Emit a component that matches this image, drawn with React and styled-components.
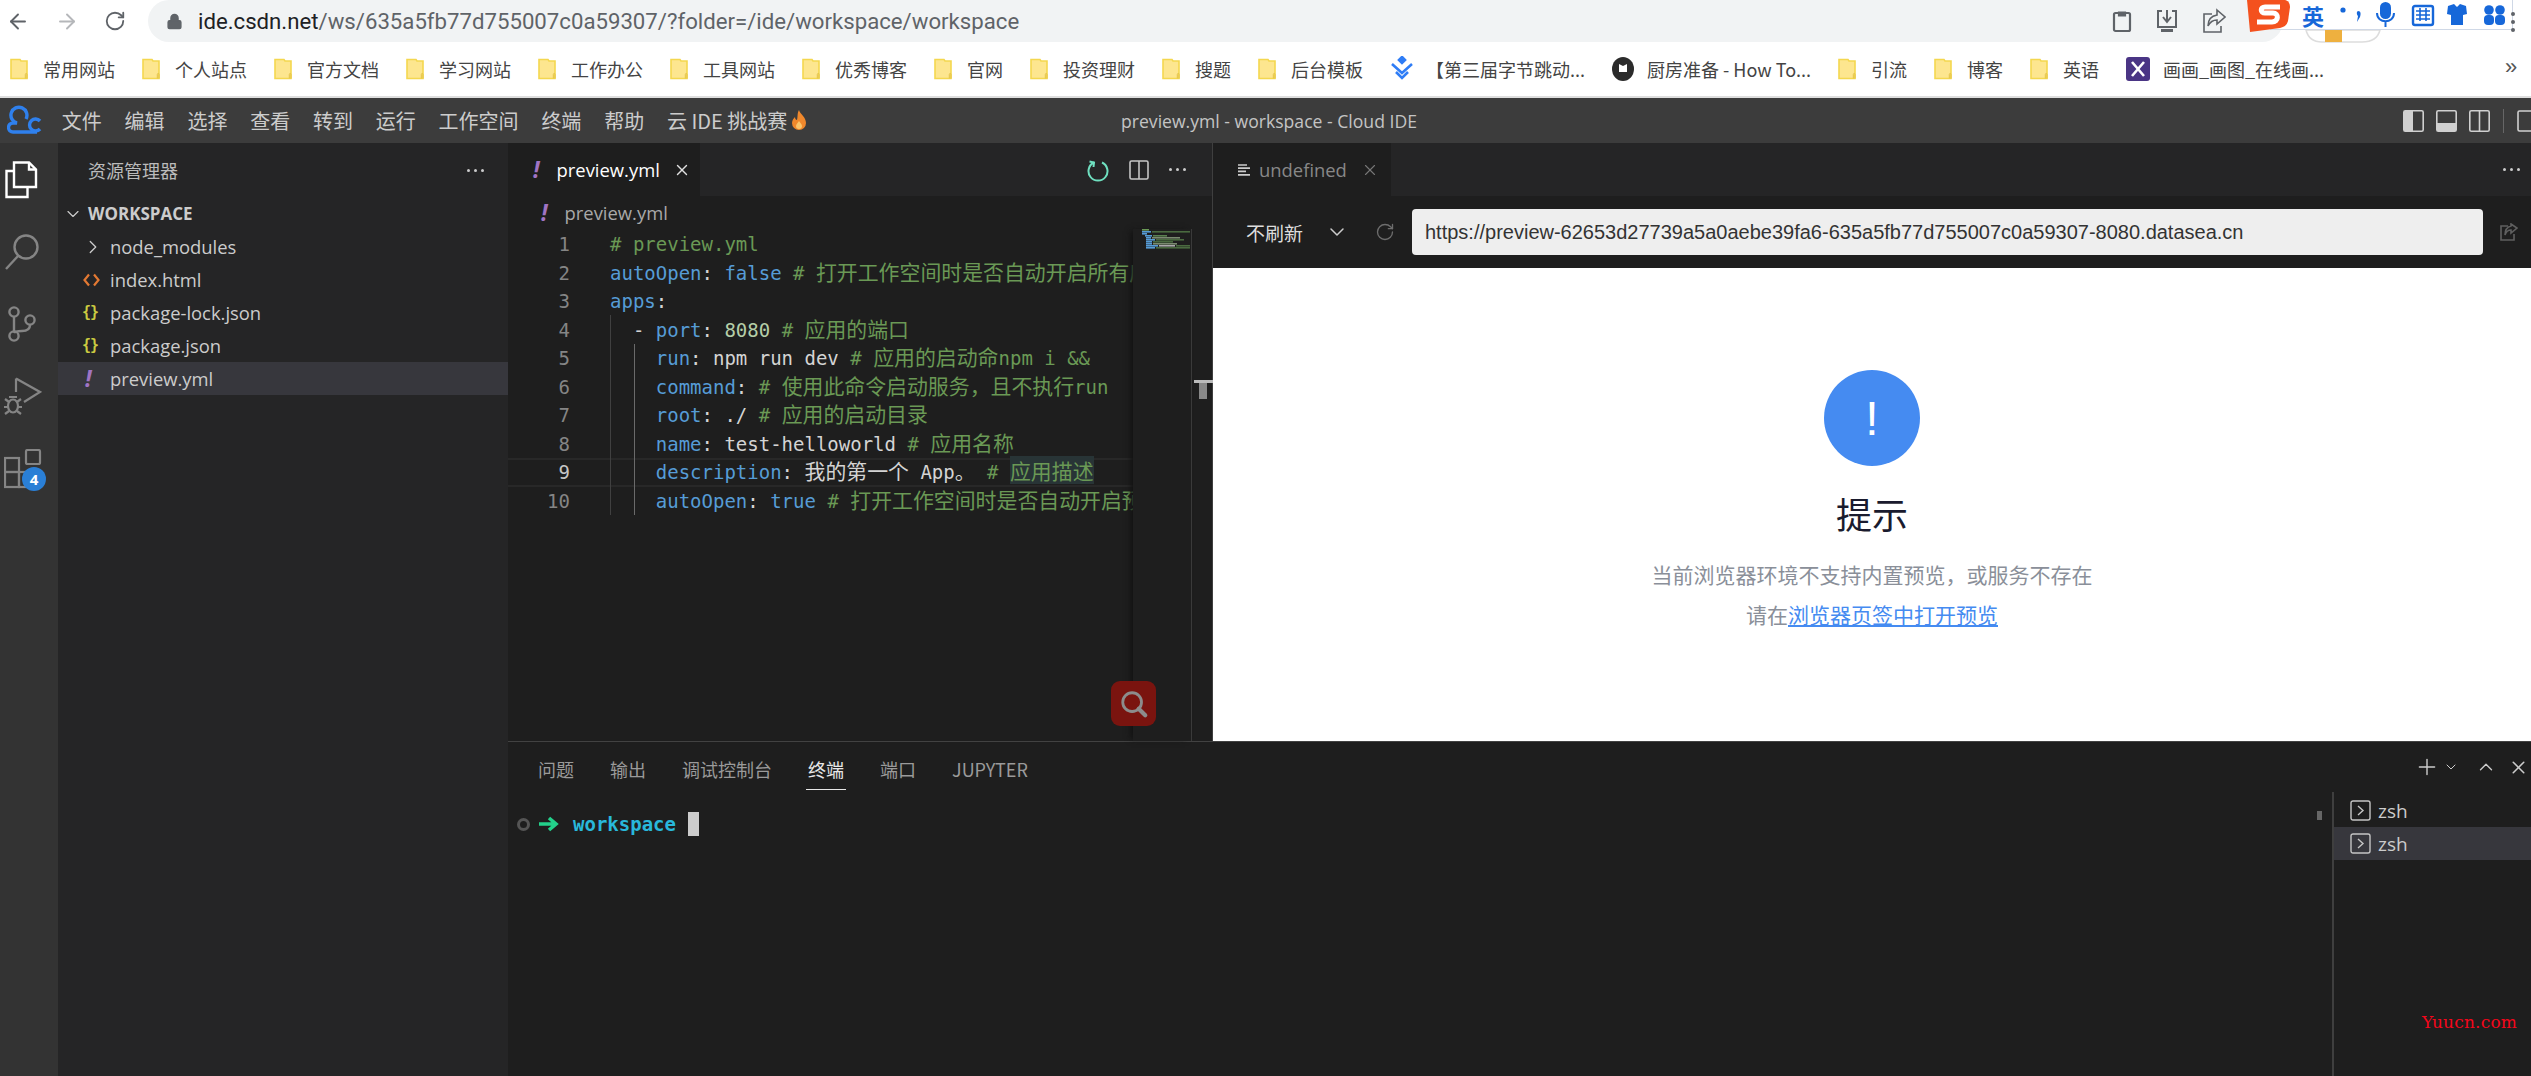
import React from "react";
import styled, { createGlobalStyle } from "styled-components";
import { ArrowLeft, ArrowRight, RotateCw, Lock, ChevronDown, ChevronRight, ChevronUp, X, Plus } from "lucide-react";

const UI = '"Open Sans","Noto Sans CJK SC",sans-serif';
const ZH = '"Noto Sans CJK SC","Open Sans",sans-serif';
const MONO = '"DejaVu Sans Mono","Noto Sans CJK SC",monospace';

const Global = createGlobalStyle`
  html, body { margin: 0; padding: 0; background: #fff; overflow: hidden; }
  * { box-sizing: border-box; }
`;

const Page = styled.div`
  position: relative; width: 2531px; height: 1076px; display: flex; flex-direction: column; overflow: hidden;
  font-family: ${UI};
`;

/* browser chrome */
const BrowserBar = styled.div`
  height: 42px; flex: none; display: flex; align-items: center; background: #fff; padding-left: 6px;
`;
const NavBtn = styled.div`
  width: 24px; height: 24px; margin-right: ${p => p.$mr || 24}px; color: ${p => p.$dim ? "#b5b7ba" : "#5f6368"};
  display: flex; align-items: center; justify-content: center;
`;
const Omnibox = styled.div`
  width: 2135px; height: 42px; margin-left: -3px; background: #f1f3f4; display: flex; align-items: center;
  padding-left: 18px; border-radius: 21px;
`;
const UrlText = styled.div`
  margin-left: 15px; font: 400 22.2px "Roboto", sans-serif; color: #5f6368; white-space: nowrap;
  b { color: #202124; font-weight: 400; }
`;
const OmniActions = styled.div`
  margin-left: auto; display: flex; gap: 23px; margin-right: 57px; align-items: center; color: #5f6368;
`;
const Bookmarks = styled.div`
  height: 54px; flex: none; display: flex; align-items: center; gap: 27px; padding-left: 10px; background: #fff; position: relative;
`;
const Bookmark = styled.div`
  display: flex; align-items: center; gap: ${p => p.$gap ?? 15}px; font: 400 18px ${ZH}; color: #444; white-space: nowrap;
`;
const More = styled.div`
  position: absolute; left: 2505px; top: 12px; font: 400 22px "Liberation Sans", sans-serif; color: #555;
`;
const Rule = styled.div`height: 2px; flex: none; background: #dedede;`;

/* IME overlay */
const Ime = styled.div`
  position: absolute; left: 2270px; top: 0; width: 243px; height: 30px; background: #fff; border: 1px solid #cfd8e6; border-top: 0;
  display: flex; align-items: center; padding-left: 31px; color: #1667d9;
`;
const ImeLetter = styled.span`font: 700 22px ${ZH}; color: #1667d9; margin-right: 15px;`;
const ImeLogo = styled.svg`position: absolute; left: 2243px; top: -1px;`;
const Peek = styled.svg`position: absolute; left: 2300px; top: 29px;`;
const MenuDots = styled.svg`position: absolute; left: 2510px; top: 11px;`;

/* IDE title */
const TitleBar = styled.div`
  height: 45px; flex: none; background: #3c3c3c; display: grid; grid-template-columns: 1fr auto 1fr; align-items: center; padding-left: 7px; color: #ccc;
`;
const TitleLeft = styled.div`display: flex; align-items: center; gap: 22.8px;`;
const Menu = styled.span`font: 400 20px ${ZH}; color: #cccccc; white-space: nowrap;`;
const Fire = styled.svg`margin-left: -19px;`;
const TitleText = styled.div`font: 400 17.6px ${UI}; color: #c4c4c4; white-space: nowrap;`;
const TitleRight = styled.div`display: flex; justify-content: flex-end; align-items: center; gap: 12px; overflow: hidden;`;
const VBar = styled.div`width: 1px; height: 24px; background: #666; margin: 0 1px;`;

/* workbench */
const Workbench = styled.div`flex: 1; min-height: 0; display: flex;`;
const ActivityBar = styled.div`
  width: 58px; flex: none; background: #333; display: flex; flex-direction: column; align-items: flex-start; gap: 36px; padding: 18px 0 0 4px; color: #858585;
`;
const ActIcon = styled.div`position: relative; width: 38px; height: 36px; color: ${p => p.$on ? "#fff" : "#858585"};`;
const Badge = styled.div`
  position: absolute; left: 18px; top: 18px; width: 24px; height: 24px; border-radius: 50%; background: #2a7fd6; color: #fff;
  font: 700 15px ${UI}; display: flex; align-items: center; justify-content: center;
`;
const SideBar = styled.div`width: 450px; flex: none; background: #252526; display: flex; flex-direction: column;`;
const SideHead = styled.div`
  height: 54px; flex: none; display: flex; align-items: center; justify-content: space-between; padding: 0 24px 0 30px;
  font: 400 18px ${ZH}; color: #bbb;
`;
const Dots = styled.div`
  display: flex; gap: 4px; margin-right: ${p => p.$mr || 0}px;
  i { width: 3px; height: 3px; border-radius: 50%; background: #ccc; display: block; }
`;
const TreeRow = styled.div`
  height: 33px; display: flex; align-items: center; color: #ccc; background: ${p => p.$on ? "#37373d" : "transparent"};
  font: ${p => p.$root ? 700 : 400} ${p => p.$root ? "17px" : "18.4px"} ${UI}; white-space: nowrap;
`;
const TreeIcon = styled.span`
  width: ${p => p.$w || 52}px; flex: none; display: flex; align-items: center; padding-left: ${p => p.$pl || 0}px;
  color: ${p => p.$c || "#ccc"};
`;
const Braces = styled.span`font: 700 15px/1 ${MONO}; color: #cbcb41; letter-spacing: -1px;`;
const Bang = styled.span`font: italic 700 ${p => p.$s || 23}px ${UI}; color: #a074c4; line-height: 1;`;

const Main = styled.div`flex: 1; min-width: 0; display: flex; flex-direction: column;`;
const TopSplit = styled.div`height: 598px; flex: none; display: flex;`;
const Editor = styled.div`width: 704px; flex: none; background: #1e1e1e; display: flex; flex-direction: column; position: relative;`;
const TabBar = styled.div`height: 53px; flex: none; background: #252526; display: flex; align-items: stretch;`;
const Tab = styled.div`
  width: ${p => p.$w}px; flex: none; background: #1e1e1e; display: flex; align-items: center; padding-left: ${p => p.$pl}px;
  font: 400 18.4px ${UI}; color: ${p => p.$on ? "#fff" : "#888"}; white-space: nowrap;
`;
const TabActions = styled.div`margin-left: auto; display: flex; align-items: center; gap: ${p => p.$gap || 15}px; padding-right: ${p => p.$pr || 21}px;`;
const Crumb = styled.div`
  height: 33px; flex: none; display: flex; align-items: center; gap: 17px; padding-left: 33px; font: 400 18.4px ${UI}; color: #a9a9a9;
`;
const CodeWrap = styled.div`flex: 1; min-height: 0; display: flex;`;
const Code = styled.div`position: relative; width: 625px; flex: none; overflow: hidden; padding-top: 1px;`;
const Row = styled.div`
  display: flex; height: 28.5px; align-items: baseline; white-space: pre; font: 400 19px/28.5px ${MONO};
  ${p => p.$cur && "box-shadow: inset 0 2px 0 #282828, inset 0 -2px 0 #282828;"}
`;
const Num = styled.span`width: 62px; flex: none; margin-right: 40px; text-align: right; color: ${p => p.$on ? "#c6c6c6" : "#858585"};`;
const K = styled.span`color: #569cd6;`;
const V = styled.span`color: #d4d4d4;`;
const N = styled.span`color: #b5cea8;`;
const C = styled.span`color: #6a9955;`;
const Zh = styled.span`
  font: 400 20.9px/21px ${ZH}; color: ${p => p.$c || "#6a9955"};
  ${p => p.$hl && "background: #283436; box-shadow: 0 3px 0 #283436, 0 -4px 0 #283436;"}
`;
const Guide = styled.div`position: absolute; left: ${p => p.$x}px; top: ${p => p.$t}px; height: ${p => p.$h}px; width: 1px; background: ${p => p.$c};`;
const Mini = styled.div`
  width: 58px; flex: none; background: #1e1e1e; box-shadow: -4px 0 6px -2px #111; position: relative; z-index: 1; padding: 0 0 0 9px;
`;
const OverviewRuler = styled.div`flex: 1; border-left: 1px solid #3b3b3b; position: relative;`;
const RulerMark = styled.div`
  position: absolute; left: 2px; top: 151px; width: 19px; height: 3px; background: #bbb;
  &::after { content: ""; position: absolute; left: 5px; top: 3px; width: 8px; height: 16px; background: #888; }
`;
const FindBtn = styled.div`
  position: absolute; left: 603px; top: 538px; width: 45px; height: 45px; border-radius: 9px; background: #7a140f;
  display: flex; align-items: center; justify-content: center; z-index: 2;
`;

const Preview = styled.div`flex: 1; min-width: 0; border-left: 1px solid #3f3f3f; display: flex; flex-direction: column; background: #fff;`;
const PvToolbar = styled.div`
  height: 72px; flex: none; background: #1e1e1e; display: flex; align-items: center; padding-left: 33px; color: #ccc;
`;
const Sel = styled.span`font: 400 19px ${ZH}; color: #ddd; width: 59px; white-space: nowrap;`;
const AddrInput = styled.div`
  width: 1071px; height: 46px; margin-left: 17px; background: #eee; border-radius: 4px; padding-left: 13px; display: flex; align-items: center;
  font: 400 20px "Liberation Sans", sans-serif; color: #333; white-space: nowrap; flex: none;
`;
const PvBody = styled.div`flex: 1; background: #fff; display: flex; flex-direction: column; align-items: center; padding-top: 102px;`;
const Circle = styled.div`
  width: 96px; height: 96px; border-radius: 50%; background: #458bf1; color: #fff; display: flex; align-items: center; justify-content: center;
  font: 300 48px "Liberation Sans", sans-serif;
`;
const Heading = styled.div`margin-top: 20px; font: 400 36px/54px ${ZH}; color: #1a1b2e;`;
const Para = styled.div`margin-top: 14px; font: 400 21px/40px ${ZH}; color: #8a8f99; text-align: center; a { color: #458bf1; text-decoration: underline; }`;

/* bottom panel */
const Panel = styled.div`flex: 1; min-height: 0; border-top: 1px solid #424242; background: #1e1e1e; display: flex; flex-direction: column; position: relative;`;
const PanelHead = styled.div`height: 50px; flex: none; display: flex; align-items: stretch; padding-left: 30px; gap: 36px;`;
const PanelTab = styled.div`
  font: 400 18px ${ZH}; color: ${p => p.$on ? "#e7e7e7" : "#9a9a9a"}; display: flex; align-items: center; padding: 4px 0 0;
  position: relative; white-space: nowrap;
  ${p => p.$on && `&::after { content: ""; position: absolute; left: -2px; right: -2px; bottom: 2px; height: 1.5px; background: #e7e7e7; }`}
`;
const PanelActions = styled.div`margin-left: auto; display: flex; align-items: center; color: #ccc; padding: 0 2px 0 0;`;
const PanelAct = styled.div`display: flex; margin-right: ${p => p.$mr || 0}px;`;
const PanelBody = styled.div`flex: 1; min-height: 0; display: flex;`;
const Term = styled.div`flex: 1; position: relative; display: flex; align-items: flex-start; padding: 20px 0 0 9px;`;
const Prompt = styled.div`display: flex; align-items: center; font: 700 19px ${MONO}; color: #29b8db; height: 24px; white-space: pre;`;
const Ring = styled.span`width: 13px; height: 13px; border: 3px solid #555; border-radius: 50%; margin-right: 9px;`;
const Cursor = styled.span`width: 11px; height: 24px; background: #ccc; margin-left: 12px;`;
const TermBar = styled.div`position: absolute; right: 10px; top: 19px; width: 5px; height: 9px; background: #666;`;
const TermList = styled.div`width: 199px; flex: none; border-left: 2px solid #3f3f3f; display: flex; flex-direction: column; padding-top: 2px;`;
const TermItem = styled.div`
  height: 33px; display: flex; align-items: center; gap: 7px; padding-left: 16px; background: ${p => p.$on ? "#37373d" : "none"};
  font: 400 19px ${UI}; color: #ccc;
`;
const Watermark = styled.div`
  position: absolute; left: 2422px; top: 1011px; font: 400 17px/22px "DejaVu Serif", serif; color: #f5061b; white-space: nowrap; letter-spacing: 0.2px;
`;
const BlueMark = styled.svg`margin-right: -1px;`;

const Folder = () => (
  <svg width="18" height="22" viewBox="0 0 18 22">
    <path d="M1 1.5h9l1 1.5h6v17.5H1z" fill="#fde68f" stroke="#f4d74f" strokeWidth="1.6" />
    <path d="M15.3 20.5v-4c0-1.4 1.7-1.4 1.7 0v4" fill="none" stroke="#e3c245" strokeWidth="1" />
  </svg>
);

const Book = ({ children }) => <Bookmark><Folder />{children}</Bookmark>;

const DotsRow = ({ mr }) => <Dots $mr={mr}><i /><i /><i /></Dots>;

const Line = ({ n, cur, children }) => (
  <Row $cur={cur}><Num $on={cur}>{n}</Num>{children}</Row>
);

const Layout = ({ kind }) => (
  <svg width="21" height="22" viewBox="0 0 21 22" fill="none">
    <rect x="0.8" y="0.8" width="19.4" height="20.4" rx="1.5" stroke="#d0d0d0" strokeWidth="1.6" />
    {kind === "left" && <rect x="1" y="1" width="9" height="20" fill="#d0d0d0" />}
    {kind === "bottom" && <rect x="1" y="13" width="19" height="8" fill="#d0d0d0" />}
    {kind === "right" && <path d="M10.5 1v20" stroke="#d0d0d0" strokeWidth="1.6" />}
  </svg>
);

const TermGlyph = () => (
  <svg width="21" height="21" viewBox="0 0 21 21" fill="none" stroke="#c5c5c5" strokeWidth="1.4">
    <rect x="1" y="1" width="19" height="19" rx="2" />
    <path d="M8 6l5 4.5L8 15" />
  </svg>
);

export default function App() {
  return (
    <Page>
      <Global />
      <BrowserBar>
        <NavBtn $mr={25}><ArrowLeft size={25} strokeWidth={1.9} /></NavBtn>
        <NavBtn $dim $mr={24}><ArrowRight size={25} strokeWidth={1.9} /></NavBtn>
        <NavBtn $mr={24}><RotateCw size={22} strokeWidth={2} /></NavBtn>
        <Omnibox>
          <Lock size={17} fill="#5f6368" color="#5f6368" />
          <UrlText><b>ide.csdn.net</b>/ws/635a5fb77d755007c0a59307/?folder=/ide/workspace/workspace</UrlText>
          <OmniActions>
            <svg width="20" height="24" viewBox="0 0 20 24" fill="none" stroke="#5f6368" strokeWidth="2.2"><rect x="2" y="4" width="16" height="18" rx="1.5" /><path d="M7 3.5h6v3H7z" fill="#5f6368" /></svg>
            <svg width="24" height="26" viewBox="0 0 24 26" fill="none" stroke="#5f6368" strokeWidth="2"><path d="M7 3H3v16h18V3h-4" /><path d="M12 2v11M8 9l4 5 4-5" /><path d="M6 22.5h12" strokeWidth="3" /></svg>
            <svg width="24" height="26" viewBox="0 0 24 26" fill="none" stroke="#5f6368" strokeWidth="1.6"><path d="M10 6H2v18h17v-6" /><path d="M15 2l8 7-8 7v-4c-4 0-7 2-9 6 0-6 3-10 9-11z" /></svg>
          </OmniActions>
        </Omnibox>
      </BrowserBar>
      <Bookmarks>
        <Book>常用网站</Book><Book>个人站点</Book><Book>官方文档</Book><Book>学习网站</Book><Book>工作办公</Book><Book>工具网站</Book><Book>优秀博客</Book><Book>官网</Book><Book>投资理财</Book><Book>搜题</Book><Book>后台模板</Book>
        <Bookmark $gap={13}>
          <BlueMark width="24" height="26" viewBox="0 0 24 26" fill="none" stroke="#2f7df6" strokeWidth="2.6"><path d="M12 1l3 3-3 3-3-3z" fill="#2f7df6" /><path d="M2 8l10 9 10-9" /><path d="M6 16l6 6 6-6" /></BlueMark>
          【第三届字节跳动...
        </Bookmark>
        <Bookmark $gap={13}>
          <svg width="22" height="24" viewBox="0 0 22 24"><ellipse cx="11" cy="12" rx="11" ry="12" fill="#2b2b2b" /><path d="M7 7l4 2 4-2v8H7z" fill="#fff" /></svg>
          厨房准备 - How To...
        </Bookmark>
        <Book>引流</Book><Book>博客</Book><Book>英语</Book>
        <Bookmark $gap={13}>
          <svg width="24" height="24" viewBox="0 0 24 24"><rect width="24" height="24" rx="3" fill="#4a3585" /><path d="M6 5l12 14M18 5L6 19" stroke="#fff" strokeWidth="2.6" /></svg>
          画画_画图_在线画...
        </Bookmark>
        <More>»</More>
      </Bookmarks>
      <Rule />
      <TitleBar>
        <TitleLeft>
          <svg width="36" height="32" viewBox="0 0 36 32" fill="none" stroke="#2f80ed" strokeWidth="3.4" style={{ marginRight: -4 }}>
            <path d="M19 14a8 8 0 1 0-9 4H6a4.5 4.5 0 0 0 0 9h24" />
            <path d="M33 16a6 6 0 1 0 0 8" />
          </svg>
          <Menu>文件</Menu><Menu>编辑</Menu><Menu>选择</Menu><Menu>查看</Menu><Menu>转到</Menu><Menu>运行</Menu><Menu>工作空间</Menu><Menu>终端</Menu><Menu>帮助</Menu><Menu>云 IDE 挑战赛</Menu>
          <Fire width="16" height="21" viewBox="0 0 16 21"><path d="M8 0c1 4 7 7 7 13a7 7 0 0 1-14 0c0-3 2-5 3-6 0 2 1 3 2 3 1-3 0-7 2-10z" fill="#f0882c" /><path d="M8 11c1 2 3 3 3 5a3 3 0 0 1-6 0c0-2 2-3 3-5z" fill="#fbc56a" /></Fire>
        </TitleLeft>
        <TitleText>preview.yml - workspace - Cloud IDE</TitleText>
        <TitleRight>
          <Layout kind="left" /><Layout kind="bottom" /><Layout kind="right" /><VBar />
          <svg width="14" height="22" viewBox="0 0 14 22" fill="none" stroke="#d0d0d0" strokeWidth="1.6"><rect x="1" y="1" width="20" height="20" rx="1.5" /></svg>
        </TitleRight>
      </TitleBar>
      <Workbench>
        <ActivityBar>
          <ActIcon $on>
            <svg width="36" height="38" viewBox="0 0 36 38" fill="none" stroke="currentColor" strokeWidth="2.4"><path d="M11 10H2.5v26h21v-9" /><path d="M10 1.5h15l7 7V26H10z" /><path d="M25 1.5v7h7" /></svg>
          </ActIcon>
          <ActIcon>
            <svg width="36" height="38" viewBox="0 0 36 38" fill="none" stroke="currentColor" strokeWidth="2.4"><circle cx="22" cy="14" r="11.5" /><path d="M14 23L2 36" /></svg>
          </ActIcon>
          <ActIcon>
            <svg width="36" height="38" viewBox="0 0 36 38" fill="none" stroke="currentColor" strokeWidth="2.4"><circle cx="10" cy="7" r="4.6" /><circle cx="10" cy="31" r="4.6" /><circle cx="26" cy="15" r="4.6" /><path d="M10 12v14M26 20c0 5-4 6-8 6s-7 0-8 2" /></svg>
          </ActIcon>
          <ActIcon>
            <svg width="38" height="38" viewBox="0 0 38 38" fill="none" stroke="currentColor" strokeWidth="2.2"><path d="M12 1.5L36 15 20 25M12 1.5V15" /><ellipse cx="9" cy="29" rx="5" ry="6.5" /><path d="M1 22l4 3M17 22l-4 3M0 30h4M14 30h4M1 37l4-3M17 37l-4-3M5 20h8" /></svg>
          </ActIcon>
          <ActIcon>
            <svg width="38" height="40" viewBox="0 0 38 40" fill="none" stroke="currentColor" strokeWidth="2.2"><rect x="1" y="9" width="14" height="14" /><rect x="1" y="23" width="14" height="15" /><rect x="15" y="23" width="14" height="15" /><rect x="22" y="1" width="14" height="14" rx="1.5" /></svg>
            <Badge>4</Badge>
          </ActIcon>
        </ActivityBar>
        <SideBar>
          <SideHead>资源管理器<DotsRow /></SideHead>
          <TreeRow $root><TreeIcon $w={30} $pl={5}><ChevronDown size={20} strokeWidth={1.4} /></TreeIcon>WORKSPACE</TreeRow>
          <TreeRow><TreeIcon $pl={24}><ChevronRight size={22} strokeWidth={1.4} /></TreeIcon>node_modules</TreeRow>
          <TreeRow><TreeIcon $pl={25}><svg width="17" height="14" viewBox="0 0 17 14" fill="none" stroke="#e37933" strokeWidth="2.2"><path d="M6 1.5L1.5 7 6 12.5M11 1.5L15.5 7 11 12.5" /></svg></TreeIcon>index.html</TreeRow>
          <TreeRow><TreeIcon $pl={24}><Braces>{"{}"}</Braces></TreeIcon>package-lock.json</TreeRow>
          <TreeRow><TreeIcon $pl={24}><Braces>{"{}"}</Braces></TreeIcon>package.json</TreeRow>
          <TreeRow $on><TreeIcon $pl={27}><Bang>!</Bang></TreeIcon>preview.yml</TreeRow>
        </SideBar>
        <Main>
          <TopSplit>
            <Editor>
              <TabBar>
                <Tab $on $w={192} $pl={25}>
                  <Bang>!</Bang><span style={{ marginLeft: 17 }}>preview.yml</span>
                  <X size={18} strokeWidth={1.8} color="#e0e0e0" style={{ marginLeft: 13 }} />
                </Tab>
                <TabActions $gap={20} $pr={26}>
                  <svg width="22" height="24" viewBox="0 0 22 24" fill="none" stroke="#6fe0c0" strokeWidth="2"><path d="M7 4.5a9.5 9.5 0 1 0 8 0" /><path d="M2.5 3.5L7 4.5 6.5 9" /></svg>
                  <svg width="20" height="20" viewBox="0 0 20 20" fill="none" stroke="#c5c5c5" strokeWidth="1.6"><rect x="1" y="1" width="18" height="18" rx="1.5" /><path d="M10 1v18" /></svg>
                  <DotsRow />
                </TabActions>
              </TabBar>
              <Crumb><Bang>!</Bang>preview.yml</Crumb>
              <CodeWrap>
                <Code>
                  <Guide $x={102} $t={86} $h={200} $c="#404040" />
                  <Guide $x={126} $t={115} $h={171} $c="#6a6a6a" />
                  <Line n={1}><C># preview.yml</C></Line>
                  <Line n={2}><K>autoOpen</K><V>: </V><K>false</K><C> # </C><Zh>打开工作空间时是否自动开启所有应用</Zh></Line>
                  <Line n={3}><K>apps</K><V>:</V></Line>
                  <Line n={4}><V>  - </V><K>port</K><V>: </V><N>8080</N><C> # </C><Zh>应用的端口</Zh></Line>
                  <Line n={5}><V>    </V><K>run</K><V>: npm run dev</V><C> # </C><Zh>应用的启动命</Zh><C>npm i &&</C></Line>
                  <Line n={6}><V>    </V><K>command</K><V>:</V><C> # </C><Zh>使用此命令启动服务，且不执行</Zh><C>run</C></Line>
                  <Line n={7}><V>    </V><K>root</K><V>: ./</V><C> # </C><Zh>应用的启动目录</Zh></Line>
                  <Line n={8}><V>    </V><K>name</K><V>: test-helloworld</V><C> # </C><Zh>应用名称</Zh></Line>
                  <Line n={9} cur><V>    </V><K>description</K><V>: </V><Zh $c="#d4d4d4">我的第一个</Zh><V> App</V><Zh $c="#d4d4d4">。</Zh><C> # </C><Zh $hl>应用描述</Zh></Line>
                  <Line n={10}><V>    </V><K>autoOpen</K><V>: </V><K>true</K><C> # </C><Zh>打开工作空间时是否自动开启预览</Zh></Line>
                </Code>
                <Mini>
                  <svg width="49" height="20" viewBox="0 0 49 20">
                    <rect x="0" y="0" width="7" height="1.6" fill="#6a9955" />
                    <rect x="0" y="2" width="9" height="1.6" fill="#569cd6" /><rect x="10" y="2" width="38" height="1.6" fill="#4a6a40" />
                    <rect x="0" y="4" width="5" height="1.6" fill="#569cd6" />
                    <rect x="3" y="6" width="7" height="1.6" fill="#569cd6" /><rect x="11" y="6" width="14" height="1.6" fill="#5a8050" />
                    <rect x="4" y="8" width="5" height="1.6" fill="#569cd6" /><rect x="10" y="8" width="28" height="1.6" fill="#7a8a70" />
                    <rect x="4" y="10" width="9" height="1.6" fill="#569cd6" /><rect x="14" y="10" width="28" height="1.6" fill="#4a6a40" />
                    <rect x="4" y="12" width="6" height="1.6" fill="#569cd6" /><rect x="11" y="12" width="20" height="1.6" fill="#4a6a40" />
                    <rect x="4" y="14" width="6" height="1.6" fill="#569cd6" /><rect x="11" y="14" width="24" height="1.6" fill="#7a8a70" />
                    <rect x="4" y="16" width="12" height="1.6" fill="#569cd6" /><rect x="17" y="16" width="16" height="1.6" fill="#aaa" /><rect x="34" y="16" width="14" height="1.6" fill="#4a6a40" />
                    <rect x="4" y="18" width="9" height="1.6" fill="#569cd6" /><rect x="14" y="18" width="34" height="1.6" fill="#4a6a40" />
                  </svg>
                </Mini>
                <OverviewRuler><RulerMark /></OverviewRuler>
              </CodeWrap>
              <FindBtn>
                <svg width="30" height="30" viewBox="0 0 32 32" fill="none" stroke="#8c8c8c" strokeWidth="3"><circle cx="14" cy="14" r="10" /><path d="M21 21l7 7" strokeWidth="4.5" strokeLinecap="round" /></svg>
              </FindBtn>
            </Editor>
            <Preview>
              <TabBar>
                <Tab $w={178} $pl={24}>
                  <svg width="14" height="14" viewBox="0 0 14 14" fill="none" stroke="#ccc" strokeWidth="1.7" style={{ marginRight: 8 }}><path d="M1 2h9M1 5.2h12M1 8.4h8M1 11.8h12" /></svg>
                  undefined
                  <X size={18} strokeWidth={1.5} color="#777" style={{ marginLeft: 14 }} />
                </Tab>
                <TabActions $gap={0}><DotsRow mr={-10} /></TabActions>
              </TabBar>
              <PvToolbar>
                <Sel>不刷新</Sel>
                <ChevronDown size={24} strokeWidth={1.5} color="#ccc" style={{ marginLeft: 20 }} />
                <RotateCw size={20} strokeWidth={1.6} color="#6d6d6d" style={{ marginLeft: 26 }} />
                <AddrInput>https://preview-62653d27739a5a0aebe39fa6-635a5fb77d755007c0a59307-8080.datasea.cn</AddrInput>
                <svg width="18" height="18" viewBox="0 0 18 18" fill="none" stroke="#5f5f5f" strokeWidth="1.6" style={{ marginLeft: 17 }}><path d="M8 3H1v14h13v-6" /><path d="M11 1l6 4-6 5V7C8 7 6 9 5 12c0-5 2-8 6-9z" /></svg>
              </PvToolbar>
              <PvBody>
                <Circle>!</Circle>
                <Heading>提示</Heading>
                <Para>当前浏览器环境不支持内置预览，或服务不存在<br />请在<a href="#preview">浏览器页签中打开预览</a></Para>
              </PvBody>
            </Preview>
          </TopSplit>
          <Panel>
            <PanelHead>
              <PanelTab>问题</PanelTab><PanelTab>输出</PanelTab><PanelTab>调试控制台</PanelTab><PanelTab $on>终端</PanelTab><PanelTab>端口</PanelTab><PanelTab>JUPYTER</PanelTab>
              <PanelActions>
                <PanelAct $mr={3}><Plus size={26} strokeWidth={1.3} /></PanelAct>
                <PanelAct $mr={16}><ChevronDown size={16} strokeWidth={1.5} /></PanelAct>
                <PanelAct $mr={11}><ChevronUp size={22} strokeWidth={1.5} /></PanelAct>
                <PanelAct><X size={21} strokeWidth={1.8} /></PanelAct>
              </PanelActions>
            </PanelHead>
            <PanelBody>
              <Term>
                <Prompt>
                  <Ring />
                  <svg width="20" height="16" viewBox="0 0 20 16" fill="none" stroke="#23d18b" strokeWidth="3.6" style={{ marginRight: 14 }}><path d="M0 8h16M10 2l7 6-7 6" /></svg>
                  workspace
                  <Cursor />
                </Prompt>
                <TermBar />
              </Term>
              <TermList>
                <TermItem><TermGlyph />zsh</TermItem>
                <TermItem $on><TermGlyph />zsh</TermItem>
              </TermList>
            </PanelBody>
          </Panel>
        </Main>
      </Workbench>

      <Peek width="90" height="14" viewBox="0 0 90 14">
        <path d="M6 1c2 8 8 12 16 12h40c10 0 16-4 18-12z" fill="#fff" stroke="#ddd" strokeWidth="1.5" />
        <rect x="25" y="0" width="17" height="13" fill="#eeb03f" />
      </Peek>
      <Ime>
        <ImeLetter>英</ImeLetter>
        <svg width="175" height="28" viewBox="0 0 175 28" fill="#1667d9" style={{ flex: "none" }}>
          <circle cx="4" cy="9" r="2.6" /><path d="M19 10c3 0 3 3 2 6l-3 5 1-6c-1-1-2-4 0-5z" />
          <rect x="41" y="1" width="11" height="17" rx="5.5" /><path d="M38 12c0 11 17 11 17 0M46.5 20v6" fill="none" stroke="#1667d9" strokeWidth="2" />
          <rect x="74" y="5" width="20" height="19" rx="2" fill="none" stroke="#1667d9" strokeWidth="2.4" /><path d="M77 10h14M77 14h14M77 18h14M81 7v13M87 7v13" stroke="#1667d9" strokeWidth="1.6" />
          <path d="M109 5l6-2 3 3 3-3 6 2 1 8-4 1v10h-12V14l-4-1z" />
          <circle cx="150" cy="9" r="4.8" /><circle cx="161" cy="9" r="4.8" /><rect x="145" y="14" width="10" height="10" rx="4" /><rect x="156" y="14" width="10" height="10" rx="4" />
        </svg>
      </Ime>
      <ImeLogo width="48" height="33" viewBox="0 0 48 33">
        <path d="M4 1h37c4 0 6 3 6 7l-2 14c-1 4-4 6-8 7L7 33z" fill="#f4511e" />
        <path d="M37 8H22c-5 0-5 6 0 6h8c6 0 6 9-1 9H14" fill="none" stroke="#fff" strokeWidth="5" />
      </ImeLogo>
      <MenuDots width="6" height="22" viewBox="0 0 6 22"><circle cx="3" cy="3" r="2" fill="#5f6368" /><circle cx="3" cy="11" r="2" fill="#5f6368" /><circle cx="3" cy="19" r="2" fill="#5f6368" /></MenuDots>
      <Watermark>Yuucn.com</Watermark>
    </Page>
  );
}
